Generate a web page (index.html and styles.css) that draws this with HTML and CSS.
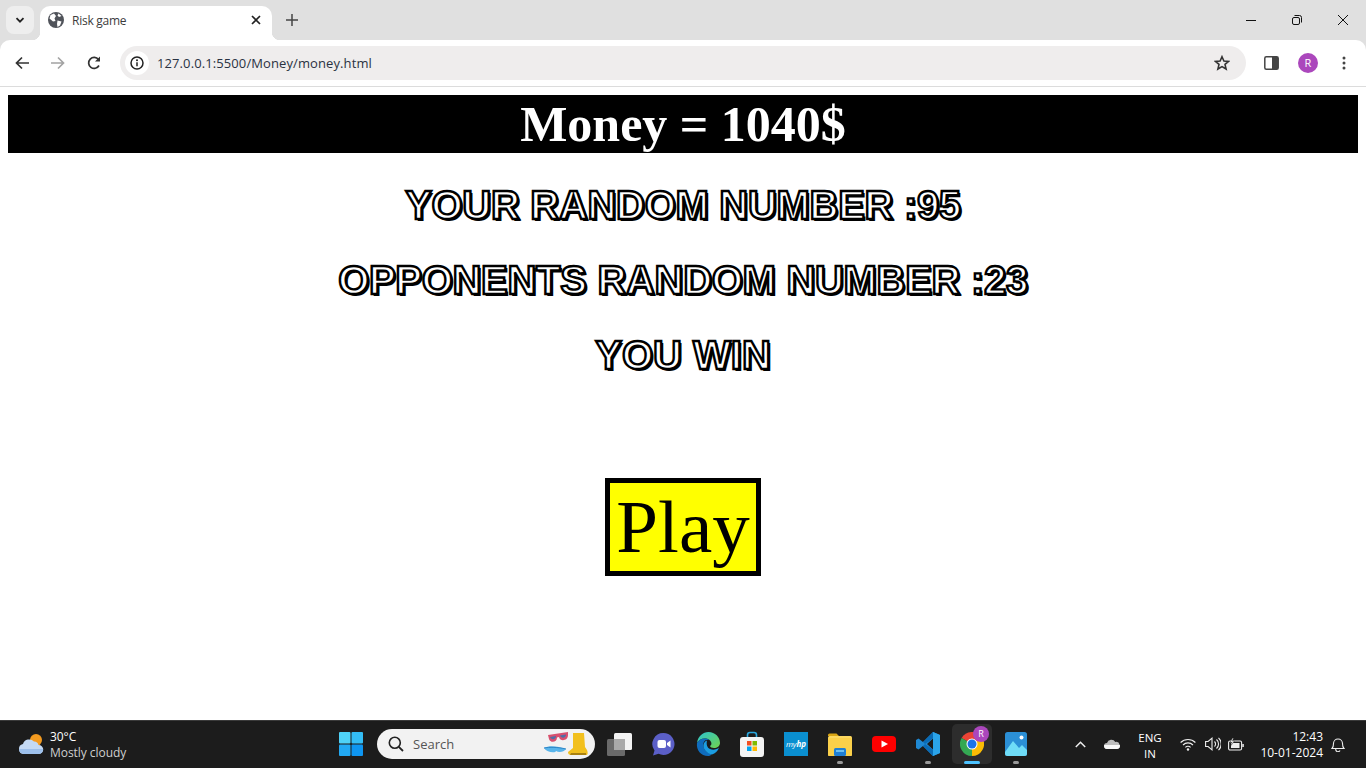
FILE: index.html
```html
<!DOCTYPE html>
<html lang="en">
<head>
    <meta charset="UTF-8">
    <title>Risk game</title>
    <link rel="stylesheet" href="styles.css">
</head>
<body>
    <div class="tabstrip">
        <div class="tab-search">
            <svg width="12" height="12" viewBox="0 0 12 12"><path d="M2.500 4.200 6 7.700l3.500-3.500" fill="none" stroke="#222" stroke-width="1.800"/></svg>
        </div>
        <div class="tab">
            <svg class="globe" width="16" height="16" viewBox="0 0 16 16"><circle cx="8" cy="8" r="8" fill="#50535a"/><path d="M2.500 3 6 1.500 8 4 6.500 6.500 7.500 9 5 9.500 1.500 6.500ZM9.500 8.500l4 1-1.500 4-2.500 1.500-.5-3ZM10.500 1.500l3 2.500-2.500 1-1.500-1.500Z" fill="#fff"/></svg>
            <span class="tab-title">Risk game</span>
            <svg class="tab-close" width="10" height="10" viewBox="0 0 10 10"><path d="M1 1l8 8M9 1 1 9" stroke="#222" stroke-width="1.700"/></svg>
        </div>
        <svg class="new-tab" width="12" height="12" viewBox="0 0 12 12"><path d="M6 0v12M0 6h12" stroke="#444" stroke-width="1.500"/></svg>
        <div class="win-controls">
            <svg width="10" height="10" viewBox="0 0 10 10"><path d="M0 5.500h10" stroke="#111"/></svg>
            <svg width="10" height="10" viewBox="0 0 10 10"><rect x=".5" y="2.500" width="7" height="7" rx="1.500" fill="none" stroke="#111"/><path d="M2.500.5h5a2 2 0 0 1 2 2v5" fill="none" stroke="#111"/></svg>
            <svg width="10" height="10" viewBox="0 0 10 10"><path d="M0 0l10 10M10 0 0 10" stroke="#111"/></svg>
        </div>
    </div>

    <div class="toolbar">
        <svg class="nav-icon" width="14" height="14" viewBox="0 0 14 14"><path d="M14 7H2M7 1.500 1.500 7 7 12.500" fill="none" stroke="#333" stroke-width="1.700"/></svg>
        <svg class="nav-icon" width="14" height="14" viewBox="0 0 14 14"><path d="M0 7h12M7 1.500 12.500 7 7 12.500" fill="none" stroke="#a3a3a3" stroke-width="1.700"/></svg>
        <svg class="nav-icon" width="14" height="14" viewBox="0 0 14 14"><path d="M12 9.500A5.500 5.500 0 1 1 11.500 3.500" fill="none" stroke="#333" stroke-width="1.700"/><path d="M13 .5v5H8z" fill="#333"/></svg>
        <div class="omnibox">
            <div class="site-info">
                <svg width="14" height="14" viewBox="0 0 14 14"><circle cx="7" cy="7" r="6" fill="none" stroke="#222" stroke-width="1.500"/><path d="M7 6.200v4" stroke="#222" stroke-width="1.500"/><circle cx="7" cy="4.200" r="1" fill="#222"/></svg>
            </div>
            <span class="url">127.0.0.1:5500/Money/money.html</span>
            <svg class="star" width="16" height="16" viewBox="0 0 16 16"><path d="M8 1.700 9.900 6l4.600.4-3.500 3 1.100 4.600L8 11.600 3.900 14 5 9.400l-3.500-3L6.100 6Z" fill="none" stroke="#333" stroke-width="1.600"/></svg>
        </div>
        <svg class="side-panel" width="15" height="14" viewBox="0 0 15 14"><rect x=".8" y=".8" width="13.400" height="12.400" rx="1.500" fill="#fff" stroke="#444" stroke-width="1.500"/><rect x="8" y="1" width="6" height="12" fill="#444"/></svg>
        <div class="avatar">R</div>
        <svg class="kebab" width="4" height="14" viewBox="0 0 4 14"><circle cx="2" cy="2" r="1.500" fill="#444"/><circle cx="2" cy="7" r="1.500" fill="#444"/><circle cx="2" cy="12" r="1.500" fill="#444"/></svg>
    </div>

    <div class="page">
        <h1 class="money">Money = 1040$</h1>
        <h2 class="result">YOUR RANDOM NUMBER :95</h2>
        <h2 class="result">OPPONENTS RANDOM NUMBER :23</h2>
        <h2 class="result verdict">YOU WIN</h2>
        <button class="play">Play</button>
    </div>

    <div class="taskbar">
        <div class="weather">
            <svg width="26" height="22" viewBox="0 0 26 22"><circle cx="18" cy="7" r="6" fill="#f39a1f"/><path d="M6 21a5 5 0 0 1-1-9.900A6.500 6.500 0 0 1 16 8.500a4.500 4.500 0 0 1 4.500 3.500A4.500 4.500 0 0 1 21 21Z" fill="#c4daf5"/><path d="M6 21a5 5 0 0 1-5-5h24a4.500 4.500 0 0 1-4 5Z" fill="#9dc0ec"/></svg>
            <div class="weather-text">
                <span class="temp">30°C</span>
                <span class="sky">Mostly cloudy</span>
            </div>
        </div>

        <div class="apps">
            <div class="app">
                <svg width="24" height="24" viewBox="0 0 24 24"><rect width="11.500" height="11.500" rx="1" fill="#4fd2f7"/><rect x="12.500" width="11.500" height="11.500" rx="1" fill="#33bdf5"/><rect y="12.500" width="11.500" height="11.500" rx="1" fill="#22a9f3"/><rect x="12.500" y="12.500" width="11.500" height="11.500" rx="1" fill="#0e95f0"/></svg>
            </div>
            <div class="search">
                <svg width="16" height="16" viewBox="0 0 16 16"><circle cx="6.800" cy="6.800" r="5.500" fill="none" stroke="#222" stroke-width="1.600"/><path d="M10.800 10.800 15 15" stroke="#222" stroke-width="1.800"/></svg>
                <span class="search-label">Search</span>
                <svg class="search-art" width="44" height="24" viewBox="0 0 44 24">
                    <path d="M4 3 24 0v3c0 6-8 7-9 2l-2 .5C13 11 6 11 5 7Z" fill="#d8506e"/>
                    <path d="M6 5l6-1c0 4-5 4-6 1ZM16 3.500l6-1c0 4-5 4-6 1Z" fill="#4d6fa5"/>
                    <path d="M0 16c5-3 14-2 22 1-2 3-7 4-10 2 0 2-9 2-12-3Z" fill="#58b4ea"/>
                    <path d="M0 16c5-1 14-1 22 1" fill="none" stroke="#2f86c6"/>
                    <path d="M29 1h11l1 14 2 3c1 3 1 5-1 5H27c-2 0-3-1-3-3l5-4Z" fill="#f2c01e"/>
                    <path d="M27 21h15v2H26z" fill="#a98110"/>
                </svg>
            </div>
            <div class="app">
                <svg width="26" height="24" viewBox="0 0 26 24"><rect x="0" y="7" width="18" height="17" rx="1.500" fill="#6a6a6a"/><rect x="7" y="1" width="18" height="17" rx="1.500" fill="#f3f3f3"/><rect x="7" y="7" width="11" height="11" fill="#a9a9a9"/></svg>
            </div>
            <div class="app">
                <svg class="meet" width="24" height="24" viewBox="0 0 24 24"><path d="M12.500 1a11 11 0 1 1-5 20.800L2 23.500l1.500-5A11 11 0 0 1 12.500 1Z" fill="#5b5fc7"/><rect x="6.500" y="8" width="8.500" height="8" rx="2" fill="#fff"/><path d="m16 11 3.500-2.500v7L16 13Z" fill="#fff"/></svg>
            </div>
            <div class="app">
                <svg width="24" height="24" viewBox="0 0 24 24"><defs><linearGradient id="edgeTop" x1="0" y1="0" x2="1" y2="1"><stop offset="0" stop-color="#2bc3d2"/><stop offset="1" stop-color="#70d44b"/></linearGradient></defs><path d="M1 11C2 4 7 0 12.500 0 19 0 24 5 24 11c0 3-3 5-6 5-2 0-4-1-4-2 2-1 2-4-.500-6C9 5 3 7 1 11Z" fill="url(#edgeTop)"/><path d="M1 11c2-4 8-6 12.500-3-5-1-7 3-6 7 .7 3 3.500 6 8 7.500C14.500 23.600 13 24 12 24 5 24 0 18 1 11Z" fill="#0f6cbd"/><path d="M7.500 15c1 4 5 7 8.500 7.500 3-1 6-3.500 7-7-2 2-6 3-9 1.500-2.500-1-4-4-3-8.500-3 1-4 4-3.500 6.500Z" fill="#1b9de2"/></svg>
            </div>
            <div class="app">
                <svg width="24" height="26" viewBox="0 0 24 26"><path d="M7.500 7V4a2.500 2.500 0 0 1 2.500-2.500h4A2.500 2.500 0 0 1 16.500 4v3" fill="none" stroke="#2aa8e0" stroke-width="1.600"/><rect y="6" width="24" height="20" rx="3" fill="#f4f4f4"/><rect x="7" y="10" width="4.500" height="4.500" fill="#f25022"/><rect x="12.500" y="10" width="4.500" height="4.500" fill="#7fba00"/><rect x="7" y="15.500" width="4.500" height="4.500" fill="#00a4ef"/><rect x="12.500" y="15.500" width="4.500" height="4.500" fill="#ffb900"/></svg>
            </div>
            <div class="app">
                <div class="myhp">my<b>hp</b></div>
            </div>
            <div class="app">
                <svg width="24" height="24" viewBox="0 0 24 24"><path d="M0 3a1.500 1.500 0 0 1 1.500-1.500h7L11 4h-11Z" fill="#d9a514"/><rect y="4" width="24" height="20" rx="1.500" fill="#fcd860"/><rect x="0" y="6" width="24" height="18" rx="1.500" fill="#fbd04a"/><rect x="6" y="16" width="12" height="8" rx="1.500" fill="#1f7fd4"/><rect x="8" y="18" width="8" height="2" fill="#6cc0f2"/></svg>
                <i class="running"></i>
            </div>
            <div class="app">
                <svg width="24" height="16" viewBox="0 0 24 16"><rect width="24" height="16" rx="4" fill="#f00"/><path d="m9.500 4.500 6.500 3.500-6.500 3.500Z" fill="#fff"/></svg>
            </div>
            <div class="app">
                <svg width="24" height="24" viewBox="0 0 24 24"><path d="M17 0 24 3v18l-7 3L7 14l-4.500 3.500L0 16v-8l2.500-1.500L7 10Zm0 6.500L11 12l6 5.500Z" fill="#1f88d2"/><path d="M17 0 24 3v18l-7 3Z" fill="#2aa4ea"/><path d="M17 6.500V0L7 10l2 2ZM9 12l-2 2L17 24v-6.500Z" fill="#0a6bb5"/></svg>
                <i class="running"></i>
            </div>
            <div class="app active">
                <svg width="24" height="24" viewBox="0 0 24 24"><path d="M12 12 22.400 6A12 12 0 0 0 1.600 6Z" fill="#ea4335"/><path d="M12 12 1.600 6A12 12 0 0 0 12 24Z" fill="#34a853"/><path d="M12 12 22.400 6A12 12 0 0 1 12 24Z" fill="#fbbc04"/><circle cx="12" cy="12" r="5.500" fill="#fff"/><circle cx="12" cy="12" r="4.500" fill="#1a73e8"/></svg>
                <div class="app-badge">R</div>
                <i class="running wide"></i>
            </div>
            <div class="app">
                <svg width="22" height="24" viewBox="0 0 22 24"><rect width="22" height="24" rx="2.500" fill="#2b8fd6"/><path d="M0 20 8 9l6 7 3-3 5 5v3.500a2.500 2.500 0 0 1-2.500 2.500h-17A2.500 2.500 0 0 1 0 21.500Z" fill="#6fdcf7"/><circle cx="16.500" cy="5.500" r="2" fill="#fff"/></svg>
                <i class="running"></i>
            </div>
        </div>

        <div class="tray">
            <svg class="tray-chevron" width="11" height="7" viewBox="0 0 11 7"><path d="M.8 6 5.500 1.300 10.200 6" fill="none" stroke="#eee" stroke-width="1.500"/></svg>
            <svg class="tray-cloud" width="16" height="10" viewBox="0 0 16 10"><path d="M3 10a3 3 0 0 1 0-6 4.500 4.500 0 0 1 8.300-1A3.500 3.500 0 0 1 13 10Z" fill="#bdbdbd"/><path d="M3 10a3 3 0 0 1-2.800-4h15.700A3.500 3.500 0 0 1 13 10Z" fill="#f8f8f8"/></svg>
            <div class="lang"><span>ENG</span><span>IN</span></div>
            <svg class="tray-wifi" width="16" height="13" viewBox="0 0 16 13"><g fill="none" stroke="#eee" stroke-width="1.100"><path d="M.6 4.500a10.500 10.500 0 0 1 14.800 0"/><path d="M3 7a7 7 0 0 1 10 0"/><path d="M5.400 9.400a3.600 3.600 0 0 1 5.200 0"/></g><circle cx="8" cy="11.500" r="1.200" fill="#eee"/></svg>
            <svg class="tray-volume" width="16" height="14" viewBox="0 0 16 14"><g fill="none" stroke="#eee" stroke-width="1.100"><path d="M.6 4.500h2.500L7 1.200v11.600L3.100 9.500H.6Z"/><path d="M9.500 4.500a3.500 3.500 0 0 1 0 5"/><path d="M11.500 2.500a6 6 0 0 1 0 9"/><path d="M13.500.8a8.500 8.500 0 0 1 0 12.400"/></g></svg>
            <svg class="tray-battery" width="16" height="13" viewBox="0 0 16 13"><rect x=".6" y="3" width="13" height="9" rx="1.500" fill="none" stroke="#eee" stroke-width="1.100"/><rect x="3" y="5" width="8.500" height="5" fill="#eee"/><rect x="14.300" y="6" width="1.500" height="3" fill="#eee"/><path d="M4.500 0 2 4.500h2L3 7.500 6.500 3h-2l1-3Z" fill="#eee" stroke="#1c1c1c" stroke-width=".4"/></svg>
            <div class="clock"><span>12:43</span><span>10-01-2024</span></div>
            <svg class="tray-bell" width="14" height="15" viewBox="0 0 14 15"><path d="M1 11.500c1.500-1.500 1.500-3 1.500-5a4.500 4.500 0 0 1 9 0c0 2 0 3.500 1.500 5ZM5 11.500a2 2 0 0 0 4 2" fill="none" stroke="#eee" stroke-width="1.100"/></svg>
        </div>
    </div>
</body>
</html>
```

FILE: styles.css
```css
html, body {
    height: 100%;
    margin: 0;
}
body {
    display: flex;
    flex-direction: column;
    overflow: hidden;
    background-color: #e0e0e0;
    font-family: "Open Sans", "Noto Sans", sans-serif;
}
svg {
    display: block;
    flex: none;
}

/* browser tabs */
.tabstrip {
    height: 40px;
    flex: none;
    display: flex;
    align-items: flex-end;
}
.tab-search {
    width: 28px;
    height: 28px;
    margin: 0 6px 6px 6px;
    border-radius: 8px;
    background-color: #eeeeee;
    display: flex;
    align-items: center;
    justify-content: center;
}
.tab {
    width: 232px;
    height: 34px;
    box-sizing: border-box;
    padding: 0 11px 6px 8px;
    border-radius: 10px 10px 0 0;
    background-color: #fff;
    display: flex;
    align-items: center;
    position: relative;
}
.tab::before,
.tab::after {
    content: "";
    position: absolute;
    bottom: 0;
    width: 8px;
    height: 8px;
}
.tab::before {
    right: 100%;
    background: radial-gradient(circle at 0 0, transparent 8px, #fff 8.500px);
}
.tab::after {
    left: 100%;
    background: radial-gradient(circle at 100% 0, transparent 8px, #fff 8.500px);
}
.tab-title {
    margin-left: 8px;
    font-size: 12px;
    letter-spacing: -0.25px;
    color: #3c3c3c;
    flex: 1;
}
.new-tab {
    margin: 0 0 14px 14px;
}
.win-controls {
    margin-left: auto;
    margin-bottom: 15px;
    padding-right: 18px;
    display: flex;
    gap: 36px;
}

/* address bar */
.toolbar {
    height: 46px;
    flex: none;
    display: flex;
    align-items: center;
    border-bottom: 1px solid #dcdcdc;
    border-radius: 10px 10px 0 0;
    background-color: #fff;
    padding-left: 15px;
}
.nav-icon {
    margin-right: 22px;
}
.nav-icon:nth-child(3) {
    margin-right: 19px;
}
.omnibox {
    width: 1126px;
    height: 34px;
    border-radius: 17px;
    background-color: #efeded;
    display: flex;
    align-items: center;
    padding-left: 5px;
    box-sizing: border-box;
}
.site-info {
    width: 24px;
    height: 24px;
    border-radius: 50%;
    background-color: #fff;
    display: flex;
    align-items: center;
    justify-content: center;
}
.url {
    margin-left: 8px;
    font-size: 13px;
    letter-spacing: 0.1px;
    color: #2a3242;
    flex: 1;
}
.star {
    margin-right: 16px;
}
.side-panel {
    margin-left: 18px;
}
.avatar {
    width: 20px;
    height: 20px;
    margin-left: 19px;
    border-radius: 50%;
    background-color: #ab47bc;
    color: #fff;
    font-size: 11px;
    line-height: 20px;
    text-align: center;
}
.kebab {
    margin-left: 24px;
}

/* the game */
.page {
    flex: 1;
    padding: 8px;
    text-align: center;
    overflow: hidden;
    background-color: #fff;
}
.money {
    margin: 0;
    height: 58px;
    line-height: 58px;
    background-color: #000;
    color: #fff;
    font-family: "Liberation Serif", serif;
    font-size: 50px;
    font-weight: bold;
}
.result {
    margin: 29px 0 0;
    height: 46px;
    line-height: 46px;
    font-family: "Liberation Sans", sans-serif;
    font-size: 40px;
    font-weight: bold;
    letter-spacing: -0.3px;
    color: #fff;
    -webkit-text-stroke: 2.4px #000;
    text-shadow: 2px 2px 0 #000;
}
.verdict {
    letter-spacing: 0;
}
.play {
    display: block;
    margin: 100px auto 0;
    padding: 1px 6px;
    border: 5px solid #000;
    border-radius: 0;
    background-color: #ff0;
    color: #000;
    font-family: "Liberation Serif", serif;
    font-size: 75px;
}

/* windows taskbar */
.taskbar {
    height: 48px;
    flex: none;
    box-sizing: border-box;
    padding-bottom: 1px;
    display: flex;
    align-items: center;
    background-color: #1c1c1c;
    border-top: 1px solid #3a3a3a;
    color: #fff;
}
.weather {
    width: 329px;
    flex: none;
    display: flex;
    align-items: center;
    box-sizing: border-box;
    padding-left: 18px;
    gap: 6px;
}
.weather-text {
    display: flex;
    flex-direction: column;
    margin-top: 2px;
    font-size: 12px;
    line-height: 16px;
    letter-spacing: -0.05px;
}
.sky {
    color: #cfcfcf;
}
.apps {
    display: flex;
    align-items: center;
}
.app {
    width: 44px;
    height: 40px;
    display: flex;
    align-items: center;
    justify-content: center;
    position: relative;
}
.meet {
    margin-right: 2px;
}
.app.active::before {
    content: "";
    position: absolute;
    left: 2px;
    right: 2px;
    top: 0;
    bottom: 0;
    border-radius: 5px;
    background-color: #2d2d2d;
}
.app.active svg {
    position: relative;
}
.running {
    position: absolute;
    left: 19px;
    bottom: 0;
    width: 6px;
    height: 3px;
    border-radius: 2px;
    background-color: #9a9a9a;
}
.running.wide {
    left: 14px;
    width: 16px;
    background-color: #4cc2ff;
}
.app-badge {
    position: absolute;
    top: 2px;
    right: 5px;
    width: 16px;
    height: 16px;
    border-radius: 50%;
    background-color: #ab47bc;
    font-size: 9px;
    line-height: 16px;
    text-align: center;
}
.myhp {
    width: 24px;
    height: 24px;
    background-color: #0a8fd0;
    font-size: 8px;
    font-style: italic;
    line-height: 24px;
    text-align: center;
}
.search {
    width: 218px;
    height: 30px;
    margin: 0 3px 0 4px;
    box-sizing: border-box;
    padding: 0 7px 0 11px;
    border-radius: 15px;
    background-color: #f2f2f2;
    display: flex;
    align-items: center;
}
.search-label {
    margin-left: 9px;
    font-size: 13px;
    color: #555;
    flex: 1;
}
.tray {
    margin-left: auto;
    display: flex;
    align-items: center;
    padding-right: 21px;
}
.tray-chevron {
    margin-right: 18px;
}
.tray-cloud {
    margin-right: 12px;
}
.lang {
    width: 36px;
    display: flex;
    flex-direction: column;
    align-items: center;
    margin-top: 3px;
    font-size: 11.500px;
    line-height: 16px;
    margin-right: 12px;
}
.tray-volume {
    margin-left: 9px;
}
.tray-battery {
    margin-left: 7px;
}
.clock {
    width: 79px;
    display: flex;
    flex-direction: column;
    align-items: flex-end;
    margin-top: 2px;
    font-size: 12px;
    line-height: 16px;
    margin-right: 8px;
}
```
